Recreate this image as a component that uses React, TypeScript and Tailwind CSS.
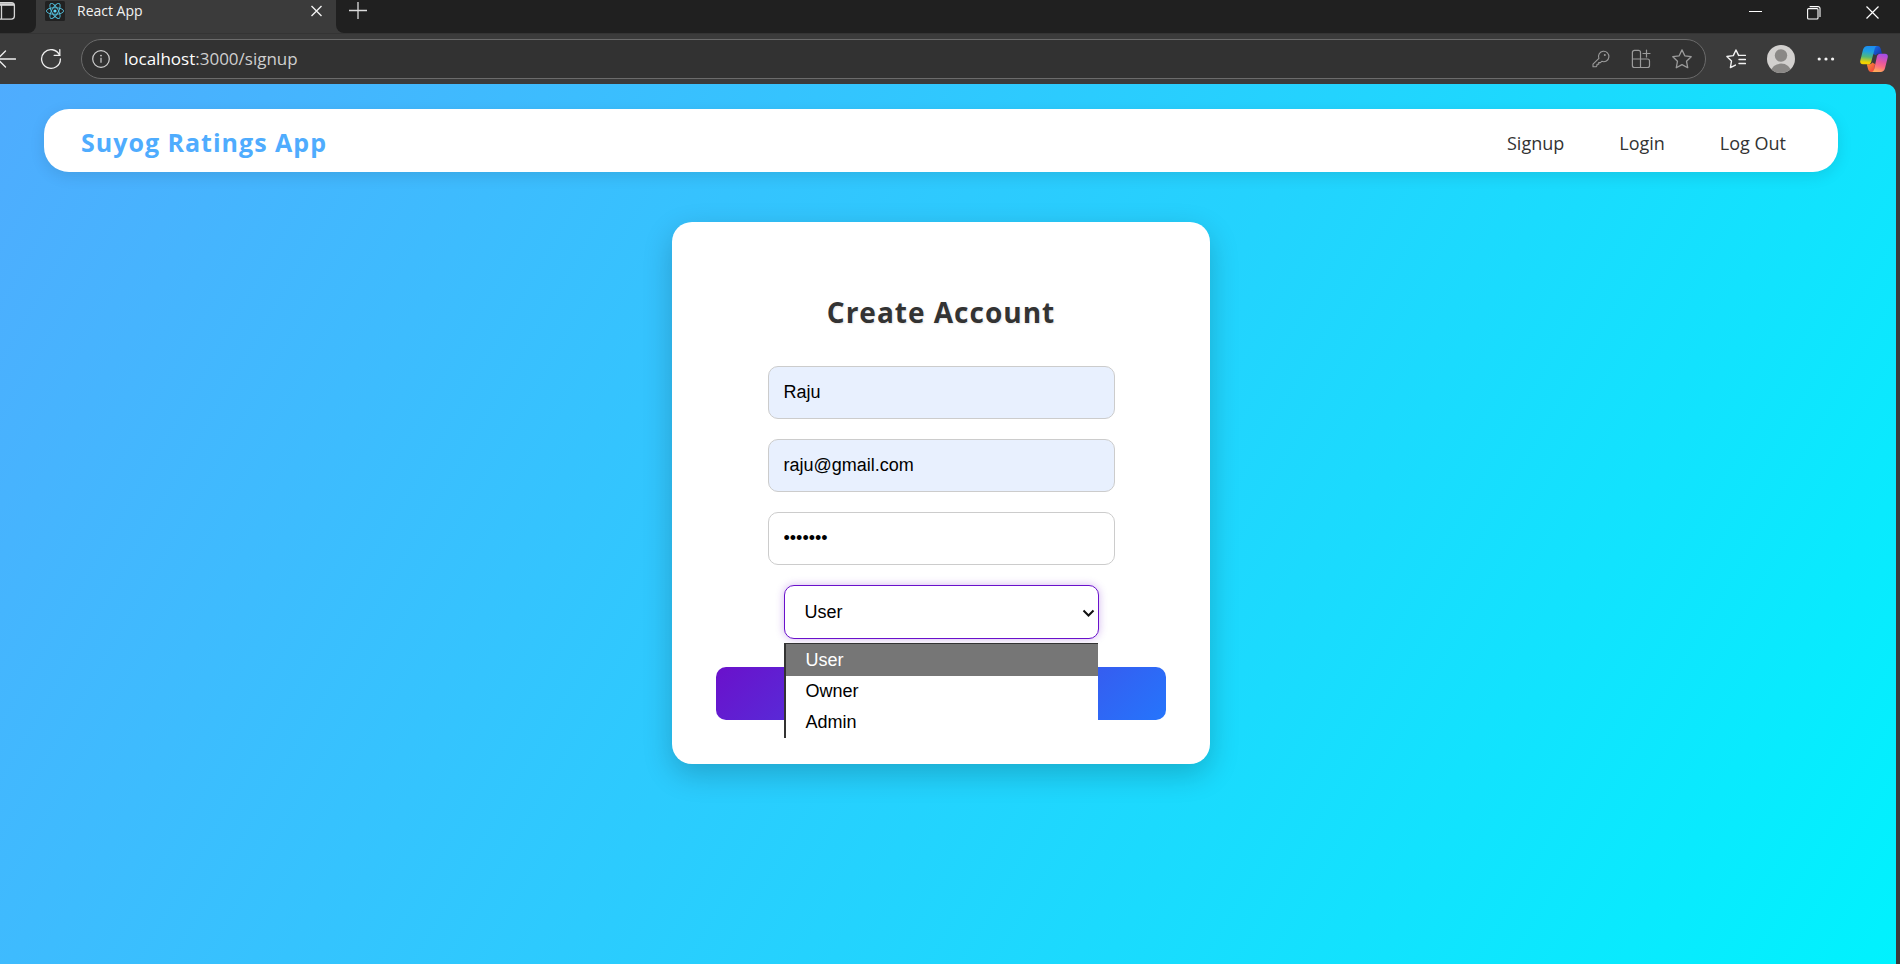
import { useState } from "react";

const ROLES = ["User", "Owner", "Admin"];

function PanelIcon() {
  return (
    <svg width="16" height="20" viewBox="0 0 16 20" fill="none" stroke="#d6d6d6" strokeWidth="1.3">
      <rect x="-4" y="2.7" width="18.4" height="16.4" rx="3" />
      <path d="M-4 4.5H14" strokeWidth="2.6" />
      <path d="M1.5 5v14" />
    </svg>
  );
}

function ReactIcon() {
  return (
    <svg width="20" height="20" viewBox="0 0 20 20" fill="none" stroke="#53c1de" strokeWidth="0.9">
      <rect width="20" height="20" rx="1.5" fill="#212121" stroke="none" />
      <ellipse cx="10" cy="10" rx="8.6" ry="3.3" />
      <ellipse cx="10" cy="10" rx="8.6" ry="3.3" transform="rotate(60 10 10)" />
      <ellipse cx="10" cy="10" rx="8.6" ry="3.3" transform="rotate(120 10 10)" />
      <circle cx="10" cy="10" r="1.6" fill="#61dafb" stroke="none" />
    </svg>
  );
}

function BackIcon() {
  return (
    <svg width="16" height="20" viewBox="0 0 16 20" fill="none" stroke="#efefef" strokeWidth="1.3" strokeLinecap="round">
      <path d="M15.5 10H-2M5.5 2L-2.5 10l8 8" />
    </svg>
  );
}

function ReloadIcon() {
  return (
    <svg width="22" height="22" viewBox="0 0 22 22" fill="none" stroke="#efefef" strokeWidth="1.3" strokeLinecap="round">
      <path d="M19.6 7.2A9.4 9.4 0 1 0 20.4 11" />
      <path d="M19.8 1.6v5.8h-5.6" />
    </svg>
  );
}

function InfoIcon() {
  return (
    <svg width="18" height="18" viewBox="0 0 18 18" fill="none" stroke="#cfcfcf" strokeWidth="1.2">
      <circle cx="9" cy="9" r="8.3" />
      <path d="M9 7.8v5" />
      <circle cx="9" cy="5.6" r="0.9" fill="#cfcfcf" stroke="none" />
    </svg>
  );
}

function KeyIcon() {
  return (
    <svg width="18" height="18" viewBox="0 0 18 18" fill="none" stroke="#9b9b9b" strokeWidth="1.1" strokeLinejoin="round">
      <path d="M6.9 8.4A5.2 5.2 0 1 1 9.8 11.3L8.4 12.6H6.7V14.3H5V15.6L4 16.8H1V14.2Z" />
      <circle cx="12.8" cy="5" r="1" fill="#9b9b9b" stroke="none" />
    </svg>
  );
}

function AppsIcon() {
  return (
    <svg width="20" height="20" viewBox="0 0 20 20" fill="none" stroke="#9b9b9b" strokeWidth="1.2" strokeLinecap="round">
      <path d="M9.5 10V3.4a2 2 0 0 0-2-2H3.4a2 2 0 0 0-2 2V16.5a2 2 0 0 0 2 2H16.5a2 2 0 0 0 2-2V12a2 2 0 0 0-2-2H1.4M9.5 10V18.5" />
      <path d="M15.5 1v7M12 4.5h7" />
    </svg>
  );
}

function StarIcon() {
  return (
    <svg width="20" height="20" viewBox="0 0 20 20" fill="none" stroke="#9b9b9b" strokeWidth="1.3" strokeLinejoin="round">
      <path d="M10 .9l2.8 5.9 6.4.9-4.7 4.5 1.2 6.5L10 15.6l-5.7 3.1 1.2-6.5L.8 7.7l6.4-.9z" />
    </svg>
  );
}

function FavoritesIcon() {
  return (
    <svg width="20" height="20" viewBox="0 0 20 20" fill="none" stroke="#f2f2f2" strokeWidth="1.4" strokeLinejoin="round" strokeLinecap="round">
      <path d="M12.6 6.4L10 1 7.3 6.6.9 7.5l4.6 4.5-1.1 6.6 5-2.5" />
      <path d="M12.6 6.4H19.4M13 10.5H19.4M13 14.5H19.4" />
    </svg>
  );
}

function AvatarIcon() {
  return (
    <svg width="28" height="28" viewBox="0 0 28 28">
      <defs>
        <clipPath id="avatar-clip">
          <circle cx="14" cy="14" r="14" />
        </clipPath>
      </defs>
      <g clipPath="url(#avatar-clip)">
        <rect width="28" height="28" fill="#d2d0ce" />
        <circle cx="14" cy="10.5" r="6.2" fill="#8a8886" />
        <ellipse cx="14" cy="27" rx="10" ry="8.4" fill="#8a8886" />
      </g>
    </svg>
  );
}

function MoreIcon() {
  return (
    <svg width="18" height="6" viewBox="0 0 18 6" fill="#f2f2f2">
      <circle cx="2.2" cy="3" r="1.6" />
      <circle cx="9" cy="3" r="1.6" />
      <circle cx="15.6" cy="3" r="1.6" />
    </svg>
  );
}

function CopilotIcon() {
  return (
    <svg width="28" height="26" viewBox="0 0 28 26">
      <defs>
        <linearGradient id="cp-left" x1="0.5" y1="0" x2="0.4" y2="1">
          <stop offset="0" stopColor="#1c8cf0" />
          <stop offset="0.3" stopColor="#1fa0e0" />
          <stop offset="0.6" stopColor="#52b87a" />
          <stop offset="0.9" stopColor="#f2d400" />
        </linearGradient>
        <linearGradient id="cp-right" x1="0.65" y1="0" x2="0.4" y2="1">
          <stop offset="0" stopColor="#a24de8" />
          <stop offset="0.45" stopColor="#e6569f" />
          <stop offset="0.7" stopColor="#fb6d80" />
          <stop offset="1" stopColor="#ffac58" />
        </linearGradient>
        <linearGradient id="cp-top" x1="0" y1="0" x2="1" y2="1">
          <stop offset="0" stopColor="#1a70e6" />
          <stop offset="1" stopColor="#1430a8" />
        </linearGradient>
        <linearGradient id="cp-bottom" x1="0" y1="0" x2="1" y2="1">
          <stop offset="0" stopColor="#fa9a35" />
          <stop offset="1" stopColor="#f0383e" />
        </linearGradient>
      </defs>
      <path d="M13.5 0h4c1.9 0 2.7 1.2 3.2 2.7L22 7.7h-3.5c-1.5 0-2 .5-2.5 1.5L13 8z" fill="url(#cp-top)" />
      <path d="M14 26h-2.7c-1.9 0-2.7-1.2-3.2-2.7L6.8 18.2H9.5c1.5 0 2.2-.6 2.6-1.7L15 18z" fill="url(#cp-bottom)" />
      <path d="M7.5 0H17.3c-1.6.2-2.2 1.4-2.7 3L11.3 15.7c-.5 1.7-1.4 2.6-3.3 2.6H3C.6 18.3-.2 16.7.3 14.4L3 3.8C3.7 1.3 5.2 0 7.5 0z" fill="url(#cp-left)" />
      <path d="M20.5 26H11.5c1.7-.2 2.3-1.4 2.7-3L17 10.3c.5-1.7 1.4-2.6 3.3-2.6H25c2.4 0 3.2 1.6 2.7 3.9L25 22.2C24.3 24.7 22.8 26 20.5 26z" fill="url(#cp-right)" />
    </svg>
  );
}

function BrowserChrome() {
  return (
    <header className="bg-[#3b3b3b]">
      <div className="flex h-[33px]">
        <div className="flex w-9 items-start rounded-br-lg bg-[#202020]">
          <button aria-label="Tab actions">
            <PanelIcon />
          </button>
        </div>
        <div className="flex h-[22px] w-[300px] items-center pr-[13px] pl-[9px]">
          <ReactIcon />
          <span className="ml-3 grow text-sm leading-5 text-[#f2f2f2]">React App</span>
          <button aria-label="Close tab">
            <svg width="13" height="12" viewBox="0 0 13 12" fill="none" stroke="#f2f2f2" strokeWidth="1.4">
              <path d="M1.5 1l10 10M11.5 1l-10 10" />
            </svg>
          </button>
        </div>
        <div className="flex grow items-start justify-between rounded-bl-lg bg-[#202020] pr-[21px] pl-[13px]">
          <button aria-label="New tab">
            <svg width="18" height="20" viewBox="0 0 18 20" fill="none" stroke="#dcdcdc" strokeWidth="1.3">
              <path d="M9 2v17M0 10.5h18" />
            </svg>
          </button>
          <div className="flex items-start gap-[45px] pt-1.5">
            <button aria-label="Minimize">
              <svg width="13" height="13" viewBox="0 0 13 13" stroke="#fff">
                <path d="M0 5.5h13" />
              </svg>
            </button>
            <button aria-label="Restore">
              <svg width="14" height="14" viewBox="0 0 14 14" fill="none" stroke="#fff" strokeWidth="1.1">
                <rect x="0.6" y="2.6" width="10.4" height="10.4" rx="1" />
                <path d="M2.6.6H11a2 2 0 0 1 2 2V11" />
              </svg>
            </button>
            <button aria-label="Close">
              <svg width="13" height="13" viewBox="0 0 13 13" fill="none" stroke="#fff" strokeWidth="1.2">
                <path d="M.5.5l12 12M12.5.5l-12 12" />
              </svg>
            </button>
          </div>
        </div>
      </div>

      <div className="flex h-[51px] items-center border-t border-[#343434] pr-3">
        <button aria-label="Back">
          <BackIcon />
        </button>
        <button aria-label="Reload" className="ml-6">
          <ReloadIcon />
        </button>
        <div className="ml-[19px] flex h-10 grow items-center rounded-full border border-[#6b6b6b] bg-[#323232] pr-[13px] pl-2.5">
          <InfoIcon />
          <span className="ml-3.5 grow text-[17px] leading-6 text-[#cfcfcf]">
            <span className="text-white">localhost</span>:3000/signup
          </span>
          <div className="flex items-center gap-[21px]">
            <button aria-label="Saved passwords">
              <KeyIcon />
            </button>
            <button aria-label="App available">
              <AppsIcon />
            </button>
            <button aria-label="Add to favorites">
              <StarIcon />
            </button>
          </div>
        </div>
        <button aria-label="Favorites" className="ml-5">
          <FavoritesIcon />
        </button>
        <button aria-label="Profile" className="ml-[21px]">
          <AvatarIcon />
        </button>
        <button aria-label="Settings and more" className="ml-[22px] flex">
          <MoreIcon />
        </button>
        <button aria-label="Copilot" className="ml-[25px]">
          <CopilotIcon />
        </button>
      </div>
    </header>
  );
}

function NavBar() {
  return (
    <nav className="flex h-[63px] items-center justify-between rounded-[25px] bg-white pt-0.5 pr-[52px] pl-[37px] shadow-[0_4px_15px_rgba(0,0,0,0.1)]">
      <h1 className="text-[25px] leading-8 font-bold tracking-[1px] text-[#4facfe]">Suyog Ratings App</h1>
      <ul className="flex gap-[55px] pt-0.5 text-lg text-[#333]">
        <li>
          <a href="#signup">Signup</a>
        </li>
        <li>
          <a href="#login">Login</a>
        </li>
        <li>
          <a href="#logout">Log Out</a>
        </li>
      </ul>
    </nav>
  );
}

const FIELD =
  "h-[53px] w-[347px] rounded-[10px] border border-[#ccc] px-[15px] font-['Liberation_Sans',Arial,sans-serif] text-lg text-black outline-none";

function SignupCard() {
  const [name, setName] = useState("Raju");
  const [email, setEmail] = useState("raju@gmail.com");
  const [password, setPassword] = useState("raju123");
  const [role, setRole] = useState("User");

  return (
    <form
      onSubmit={(e) => e.preventDefault()}
      className="mx-auto mt-[50px] flex w-[538px] flex-col items-center rounded-[20px] bg-white px-11 pt-[70px] pb-11 shadow-[0_10px_30px_rgba(0,0,0,0.2)]"
    >
      <h2 className="mb-[34px] text-[28px] leading-10 font-bold tracking-[1px] text-[#333] [text-shadow:1px_1px_2px_rgba(0,0,0,0.1)]">
        Create Account
      </h2>
      <div className="flex flex-col items-center gap-5">
        <input
          aria-label="Name"
          value={name}
          onChange={(e) => setName(e.target.value)}
          className={`${FIELD} bg-[#e8f0fe]`}
        />
        <input
          aria-label="Email"
          type="email"
          value={email}
          onChange={(e) => setEmail(e.target.value)}
          className={`${FIELD} bg-[#e8f0fe]`}
        />
        <input
          aria-label="Password"
          type="password"
          value={password}
          onChange={(e) => setPassword(e.target.value)}
          className={`${FIELD} bg-white`}
        />
        <div className="relative w-[315px] font-['Liberation_Sans',Arial,sans-serif] text-lg">
          <select
            aria-label="Role"
            value={role}
            onChange={(e) => setRole(e.target.value)}
            className="block h-[54px] w-full appearance-none rounded-[10px] border border-[#6a11cb] bg-white pl-5 text-black shadow-[0_0_8px_rgba(106,17,203,0.3)] outline-none"
          >
            {ROLES.map((r) => (
              <option key={r}>{r}</option>
            ))}
          </select>
          <svg
            className="pointer-events-none absolute top-6 right-1"
            width="13"
            height="9"
            viewBox="0 0 13 9"
            fill="none"
            stroke="#111"
            strokeWidth="2"
          >
            <path d="M1.5 1.5l5 5 5-5" />
          </svg>
          <ul
            role="listbox"
            aria-label="Role options"
            className="absolute top-[58px] left-0 z-10 w-[314px] border-t border-l-2 border-[#333] bg-white"
          >
            {ROLES.map((r) => (
              <li
                key={r}
                role="option"
                aria-selected={r === role}
                onClick={() => setRole(r)}
                className="h-[31px] pl-5 leading-[30px] text-black first:h-8 first:leading-8 aria-selected:bg-[#767676] aria-selected:text-white"
              >
                {r}
              </li>
            ))}
          </ul>
        </div>
      </div>
      <button
        type="submit"
        aria-label="Create account"
        className="mt-7 h-[53px] w-full rounded-[10px] bg-[linear-gradient(135deg,#6a11cb,#2575fc)]"
      />
    </form>
  );
}

export default function App() {
  return (
    <div className="flex min-h-screen flex-col bg-[#3b3b3b] font-['Open_Sans','Noto_Sans',sans-serif]">
      <BrowserChrome />
      <main className="mr-1 grow rounded-tr-[10px] bg-[linear-gradient(120deg,#4facfe,#00f2fe)] pt-[25px] pr-[58px] pl-11">
        <NavBar />
        <SignupCard />
      </main>
    </div>
  );
}
